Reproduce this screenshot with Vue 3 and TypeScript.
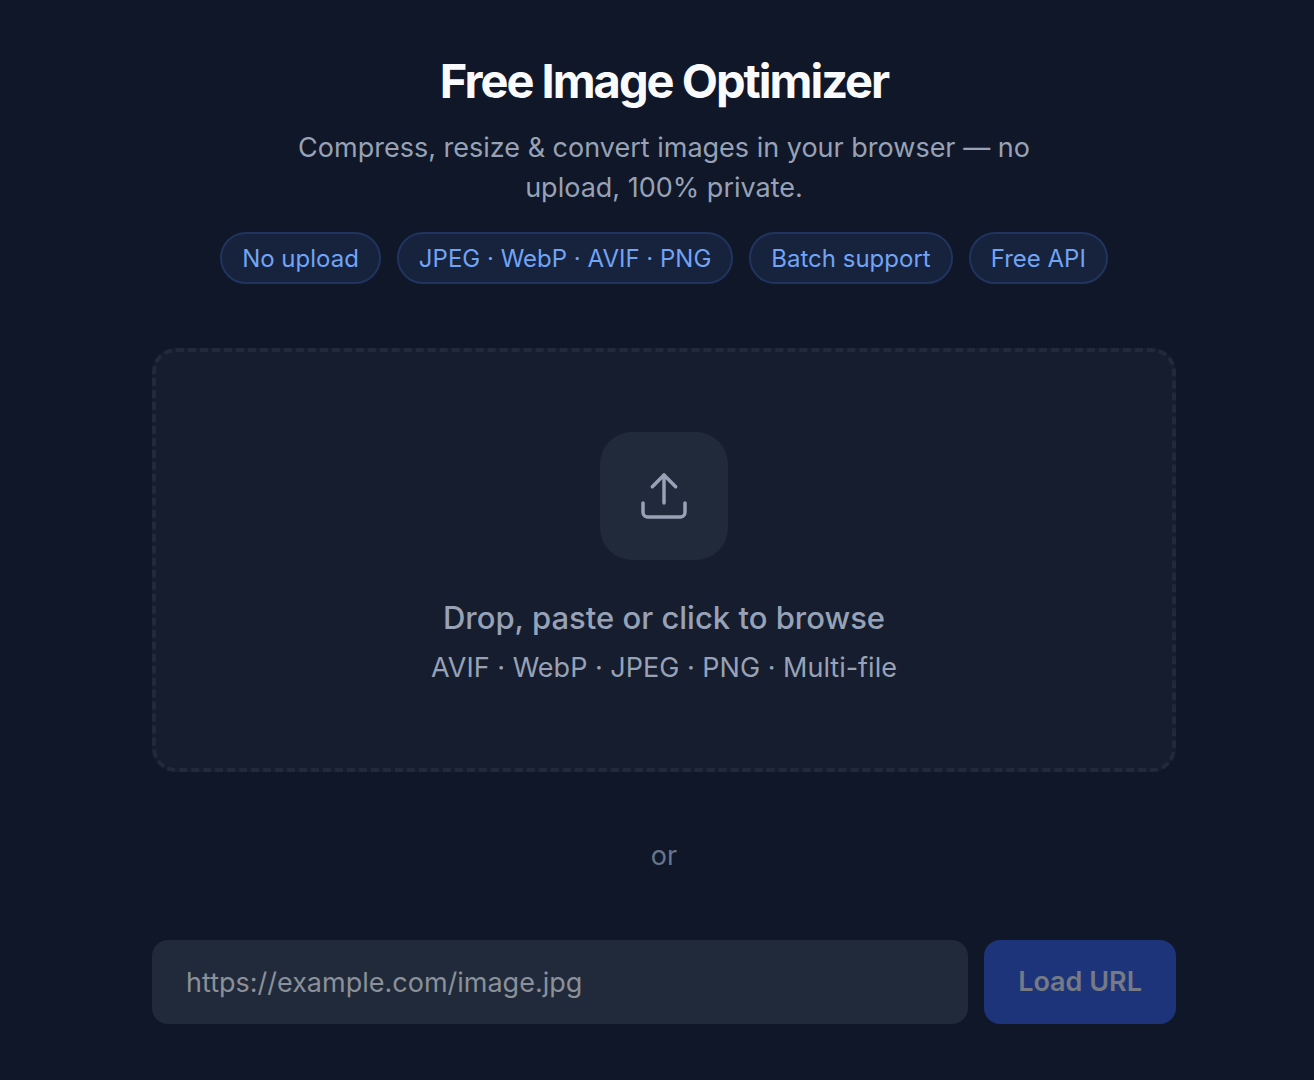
<script setup lang="ts">
import { ref } from 'vue'

const badges: string[] = ['No upload', 'JPEG · WebP · AVIF · PNG', 'Batch support', 'Free API']
const url = ref<string>('')
</script>

<template>
  <main class="page">
    <header class="hero">
      <h1>Free Image Optimizer</h1>
      <p class="lead">Compress, resize &amp; convert images in your browser — no upload, 100% private.</p>
      <ul class="badges">
        <li v-for="badge in badges" :key="badge">{{ badge }}</li>
      </ul>
    </header>

    <button type="button" class="dropzone">
      <span class="tile">
        <svg viewBox="0 0 24 24" aria-hidden="true">
          <path d="M21 15v4a2 2 0 0 1-2 2H5a2 2 0 0 1-2-2v-4" />
          <path d="m17 8-5-5-5 5" />
          <path d="M12 3v12" />
        </svg>
      </span>
      <span class="drop-title">Drop, paste or click to browse</span>
      <span class="drop-formats">AVIF · WebP · JPEG · PNG · Multi-file</span>
    </button>

    <p class="divider">or</p>

    <form class="url-form" @submit.prevent>
      <input v-model="url" type="url" aria-label="Image URL" placeholder="https://example.com/image.jpg" />
      <button type="submit" :disabled="!url">Load URL</button>
    </form>
  </main>
</template>

<style>
body {
  background: #101728;
}
</style>

<style scoped>
.page {
  box-sizing: border-box;
  max-width: 1102px;
  margin: 0 auto;
  padding: 48px 32px 56px 46px;
  font-family: Inter, "Noto Sans", sans-serif;
  color: #97a2b6;
}

.hero {
  display: flex;
  flex-direction: column;
  align-items: center;
  text-align: center;
}

h1 {
  margin: 0;
  color: #f9fafc;
  font-size: 47px;
  line-height: 66px;
  font-weight: 700;
  letter-spacing: -2px;
}

.lead {
  max-width: 768px;
  margin: 14px 0 24px;
  font-size: 27px;
  line-height: 40px;
}

.badges {
  display: flex;
  flex-wrap: wrap;
  justify-content: center;
  gap: 16px;
  margin: 0;
  padding: 0;
  list-style: none;
}

.badges li {
  padding: 9px 20px 7px;
  border: 2px solid #21345f;
  border-radius: 26px;
  background: #17223d;
  color: #70a4f5;
  font-size: 24px;
  line-height: 32px;
  font-weight: 400;
}

.dropzone {
  display: flex;
  flex-direction: column;
  align-items: center;
  box-sizing: border-box;
  width: 100%;
  margin: 64px 0 0;
  padding: 80px 32px;
  border: 4px dashed #212a3a;
  border-radius: 24px;
  background: #161d2e;
  color: inherit;
  font: inherit;
  cursor: pointer;
}

.tile {
  display: grid;
  place-items: center;
  width: 128px;
  height: 128px;
  margin-bottom: 34px;
  border-radius: 32px;
  background: #212a3a;
}

.tile svg {
  width: 56px;
  height: 56px;
  fill: none;
  stroke: currentColor;
  stroke-width: 1.5;
  stroke-linecap: round;
  stroke-linejoin: round;
}

.drop-title {
  font-size: 31px;
  line-height: 48px;
  font-weight: 500;
}

.drop-formats {
  margin-top: 6px;
  font-size: 27px;
  line-height: 40px;
}

.divider {
  margin: 64px 0;
  color: #68758b;
  font-size: 27px;
  line-height: 40px;
  text-align: center;
}

.url-form {
  display: flex;
  gap: 16px;
}

.url-form input,
.url-form button {
  box-sizing: border-box;
  height: 84px;
  border: 0;
  border-radius: 16px;
  font-family: inherit;
  font-size: 27px;
  line-height: 40px;
}

.url-form input {
  flex: 1;
  min-width: 0;
  padding: 0 34px;
  background: #212a3a;
  color: #f3f4f6;
}

.url-form input::placeholder {
  color: #8b9099;
  opacity: 1;
}

.url-form button {
  padding: 0 34px;
  background: #1d347b;
  color: #757a85;
  font-weight: 600;
}
</style>
